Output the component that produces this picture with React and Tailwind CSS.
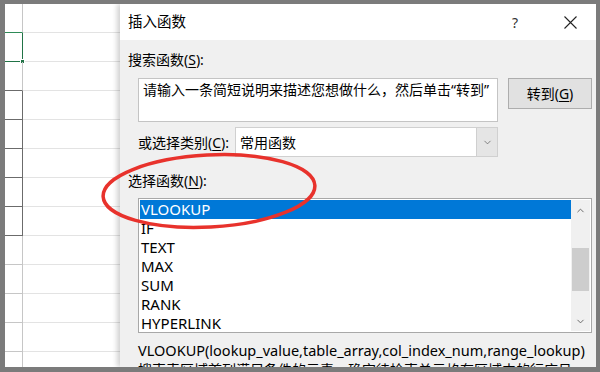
import { ChevronDown, ChevronUp } from 'lucide-react'

const rows = [
  { a: 'border-b-[#2e8b57] border-b', b: '' },
  { a: 'border-b border-b-[#217346] border-r-[#217346]', b: '', sel: true },
  { a: 'border-b-[#6b6b6b]', b: '' },
  { a: 'border-b-[#6b6b6b] border-r-[#6b6b6b]', b: '' },
  { a: 'border-b-[#6b6b6b] border-r-[#6b6b6b]', b: '' },
  { a: 'border-b-[#6b6b6b] border-r-[#6b6b6b]', b: '' },
  { a: 'border-b-[#6b6b6b] border-r-[#6b6b6b]', b: '' },
  { a: 'border-b-[#6b6b6b] border-r-[#6b6b6b]', b: '' },
  { a: '', b: '' },
  { a: '', b: '' },
  { a: '', b: '' },
  { a: '', b: '' },
  { a: '', b: '' },
]

const funcs = ['VLOOKUP', 'IF', 'TEXT', 'MAX', 'SUM', 'RANK', 'HYPERLINK']

const Sheet = () => (
  <div className="w-[115px] shrink-0 bg-white flex flex-col overflow-hidden">
    {rows.map((r, i) => (
      <div key={i} className="flex h-[29px] shrink-0">
        <div className={`relative w-[18px] shrink-0 border-b border-r border-[#c6c6c6] ${r.a}`}>
          {r.sel && <div className="absolute right-[-3px] bottom-[-3px] w-[5px] h-[5px] bg-[#217346] border border-white" />}
        </div>
        <div className="flex-1 border-b border-[#e3e3e3]" />
      </div>
    ))}
  </div>
)

const U = ({ children }) => <span className="underline underline-offset-2">{children}</span>

const Dialog = () => (
  <div className="relative w-[476px] min-w-0 shrink-0 flex flex-col overflow-hidden bg-[#f0f0f0] shadow-[-3px_0_5px_rgba(0,0,0,0.18)]">
    <div className="h-[36px] shrink-0 bg-white flex items-center pl-[8px] pr-[16px] text-[14.5px] text-black">
      <span className="flex-1">插入函数</span>
      <span className="w-[14px] text-center text-[14px] text-[#333] mr-[42px]">?</span>
      <svg width="13" height="13" viewBox="0 0 13 13" className="mr-[3px]">
        <path d="M0.5 0.5 L12.5 12.5 M12.5 0.5 L0.5 12.5" stroke="#222" strokeWidth="1.1" fill="none" />
      </svg>
    </div>

    <div className="flex flex-col shrink-0 pl-[8px] pr-[4px] text-[14px] text-black">
      <div className="h-[20px] mt-[10px] leading-[20px]">搜索函数(<U>S</U>):</div>

      <div className="flex gap-[10px] pl-[10px] mt-[8px]">
        <div className="w-[360px] h-[44px] bg-white border border-[#c4c4c4] px-[4px] pt-[1px] leading-[20px]">
          请输入一条简短说明来描述您想做什么，然后单击“转到”
        </div>
        <div className="w-[84px] h-[31px] bg-[#e1e1e1] border border-[#adadad] flex items-center justify-center">
          转到(<U>G</U>)
        </div>
      </div>

      <div className="flex items-center pl-[10px] mt-[5px]">
        <span className="w-[97px]">或选择类别(<U>C</U>):</span>
        <div className="w-[263px] h-[30px] bg-white border border-[#d0d0d0] flex items-center">
          <span className="flex-1 pl-[4px]">常用函数</span>
          <div className="w-[21px] h-full bg-[#e5e5e5] border-l border-[#cfcfcf] flex items-center justify-center">
            <ChevronDown size={11} strokeWidth={1.5} color="#555" />
          </div>
        </div>
      </div>

      <div className="h-[20px] mt-[14px] leading-[20px]">选择函数(<U>N</U>):</div>

      <div className="ml-[10px] mt-[7px] w-[454px] h-[135px] bg-white border border-[#a8a8a8] flex p-[1px]">
        <div className="flex-1 flex flex-col text-[15px]">
          {funcs.map((f, i) => (
            <div
              key={f}
              className={`h-[19px] leading-[19px] pl-[1px] ${i === 0 ? 'bg-[#0078d7] text-white' : 'text-black'}`}
            >
              {f}
            </div>
          ))}
        </div>
        <div className="w-[19px] bg-[#f0f0f0] flex flex-col items-center">
          <div className="h-[20px] flex items-center justify-center">
            <ChevronUp size={11} strokeWidth={2} color="#606060" />
          </div>
          <div className="flex-1 w-full pt-[28px] pb-[20px] px-[1px]">
            <div className="w-full h-full bg-[#cdcdcd]" />
          </div>
          <div className="h-[20px] flex items-center justify-center">
            <ChevronDown size={11} strokeWidth={2} color="#606060" />
          </div>
        </div>
      </div>

      <div className="pl-[10px] mt-[7px] leading-[20px] text-[14.5px] whitespace-nowrap">
        VLOOKUP(lookup_value,table_array,col_index_num,range_lookup)
      </div>
      <div className="pl-[10px] leading-[20px] whitespace-nowrap">
        搜索表区域首列满足条件的元素，确定待检索单元格在区域中的行序号
      </div>
    </div>
  </div>
)

const App = () => (
  <div
    className="relative w-[600px] h-[372px] bg-[#7b7b7b] pt-[4px] pl-[5px] pr-[4px] pb-[5px] overflow-hidden"
    style={{ fontFamily: '"Noto Sans", "Noto Sans CJK SC", sans-serif' }}
  >
    <div className="w-full h-full flex overflow-hidden">
      <Sheet />
      <Dialog />
    </div>
    <svg className="absolute left-0 top-0 pointer-events-none" width="600" height="372">
      <ellipse cx="209" cy="191" rx="106" ry="36" transform="rotate(-3 209 191)" fill="none" stroke="#e8322c" strokeWidth="3.5" />
    </svg>
  </div>
)

export default App
